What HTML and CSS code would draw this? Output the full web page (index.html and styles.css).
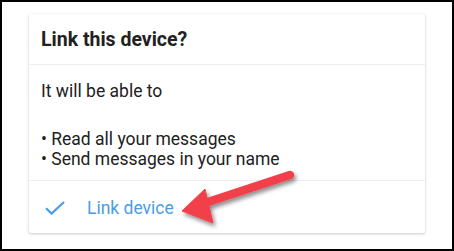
FILE: index.html
```html
<!DOCTYPE html>
<html>
<head>
<meta charset="utf-8">
<link rel="stylesheet" href="styles.css">
</head>
<body>
<div class="frame">
  <div class="card">
    <div class="card-header">Link this device?</div>
    <div class="card-body">
      <p class="intro">It will be able to</p>
      <ul class="perms">
        <li>• Read all your messages</li>
        <li>• Send messages in your name</li>
      </ul>
    </div>
    <div class="card-footer">
      <svg class="check" width="20" height="14" viewBox="0 0 20 14"><path d="M1 7.2 L6.6 12.6 L19 1" fill="none" stroke="#4a9de4" stroke-width="2.2"/></svg>
      <span class="action">Link device</span>
    </div>
  </div>
  <svg class="arrow" width="454" height="251" viewBox="0 0 454 251">
    <defs>
      <filter id="sh" x="-20%" y="-50%" width="140%" height="200%">
        <feDropShadow dx="2" dy="3" stdDeviation="2" flood-color="#000" flood-opacity="0.45"/>
      </filter>
    </defs>
    <g filter="url(#sh)" fill="#f2414b" stroke="#f2414b">
      <line x1="290" y1="175" x2="205" y2="203" stroke-width="8.5" stroke-linecap="round"/>
      <polygon points="182,211 205,189 213,223" stroke-width="1" stroke-linejoin="round"/>
    </g>
  </svg>
</div>
</body>
</html>
```
FILE: styles.css
```css
* { box-sizing: border-box; }
html, body { margin: 0; padding: 0; background: #fff; }
body { font-family: Roboto, "Noto Sans", sans-serif; color: #212121; }
.frame {
  position: relative;
  width: 454px;
  height: 251px;
  border: 2px solid #000;
  padding: 12px 0 0 27px;
}
.card {
  width: 396px;
  height: 219px;
  background: #fff;
  border-radius: 2px;
  box-shadow: 0 1px 3px rgba(0,0,0,0.22), 0 0 1px rgba(0,0,0,0.08);
  display: flex;
  flex-direction: column;
}
.card-header {
  height: 51px;
  display: flex;
  align-items: center;
  padding-left: 12px;
  font-size: 19.5px;
  font-weight: 700;
  border-bottom: 1px solid #efefef;
}
.card-body {
  height: 116px;
  padding: 15px 12px 0 12px;
  border-bottom: 1px solid #efefef;
  font-size: 17.5px;
}
.intro { margin: 0; line-height: 22px; }
.perms { list-style: none; margin: 27px 0 0 0; padding: 0; line-height: 20px; }
.card-footer {
  flex: 1;
  display: flex;
  align-items: center;
  padding-left: 16px;
  padding-top: 2px;
}
.check { display: block; }
.action {
  margin-left: 22px;
  color: #4a9de4;
  font-size: 17.5px;
}
.arrow { position: absolute; left: -2px; top: -2px; pointer-events: none; }
```
